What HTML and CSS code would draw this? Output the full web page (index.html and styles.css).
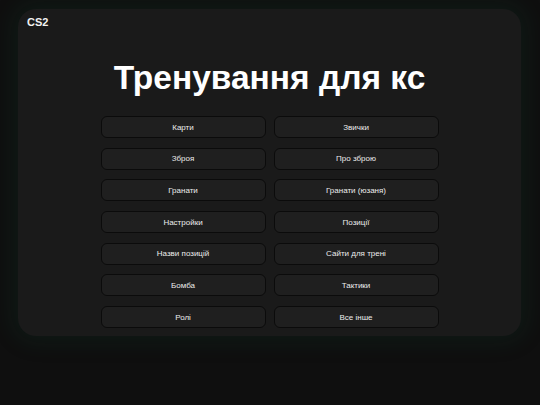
FILE: index.html
```html
<!DOCTYPE html>
<html lang="uk">
<head>
<meta charset="utf-8">
<title>Тренування для кс</title>
<link rel="stylesheet" href="styles.css">
</head>
<body>
<main class="panel">
  <header class="brand">CS2</header>
  <h1 class="title">Тренування для кс</h1>
  <nav class="menu">
    <a class="btn" href="#">Карти</a>
    <a class="btn" href="#">Звички</a>
    <a class="btn" href="#">Зброя</a>
    <a class="btn" href="#">Про зброю</a>
    <a class="btn" href="#">Гранати</a>
    <a class="btn" href="#">Гранати (юзаня)</a>
    <a class="btn" href="#">Настройки</a>
    <a class="btn" href="#">Позиції</a>
    <a class="btn" href="#">Назви позицій</a>
    <a class="btn" href="#">Сайти для трені</a>
    <a class="btn" href="#">Бомба</a>
    <a class="btn" href="#">Тактики</a>
    <a class="btn" href="#">Ролі</a>
    <a class="btn" href="#">Все інше</a>
  </nav>
</main>
</body>
</html>
```
FILE: styles.css
```css
html, body {
  margin: 0;
  padding: 0;
  background: #0f0f0f;
  font-family: "Liberation Sans", Arial, sans-serif;
}
body {
  width: 540px;
  height: 405px;
  overflow: hidden;
  padding-top: 9px;
  box-sizing: border-box;
}
.panel {
  margin: 0 19px 0 18px;
  height: 327px;
  box-sizing: border-box;
  background: #1a1a1a;
  border-radius: 18px;
  box-shadow: 0 0 22px 6px rgba(20, 80, 55, 0.16);
  padding: 7px 9px 8px;
  display: flex;
  flex-direction: column;
  align-items: stretch;
}
.brand {
  color: #f2f2f2;
  font-weight: bold;
  font-size: 11px;
  line-height: 13px;
}
.title {
  margin: 30px 0 0;
  text-align: center;
  color: #ffffff;
  font-weight: bold;
  font-size: 33.5px;
  line-height: 38px;
}
.menu {
  margin: 19px auto 0;
  display: grid;
  grid-template-columns: 165px 165px;
  column-gap: 8px;
  row-gap: 9.7px;
}
.btn {
  display: flex;
  align-items: center;
  justify-content: center;
  height: 22px;
  box-sizing: border-box;
  background: #1f1f1f;
  border: 1px solid #0b0b0b;
  border-radius: 6px;
  color: #ececec;
  font-size: 8px;
  text-decoration: none;
}
```
